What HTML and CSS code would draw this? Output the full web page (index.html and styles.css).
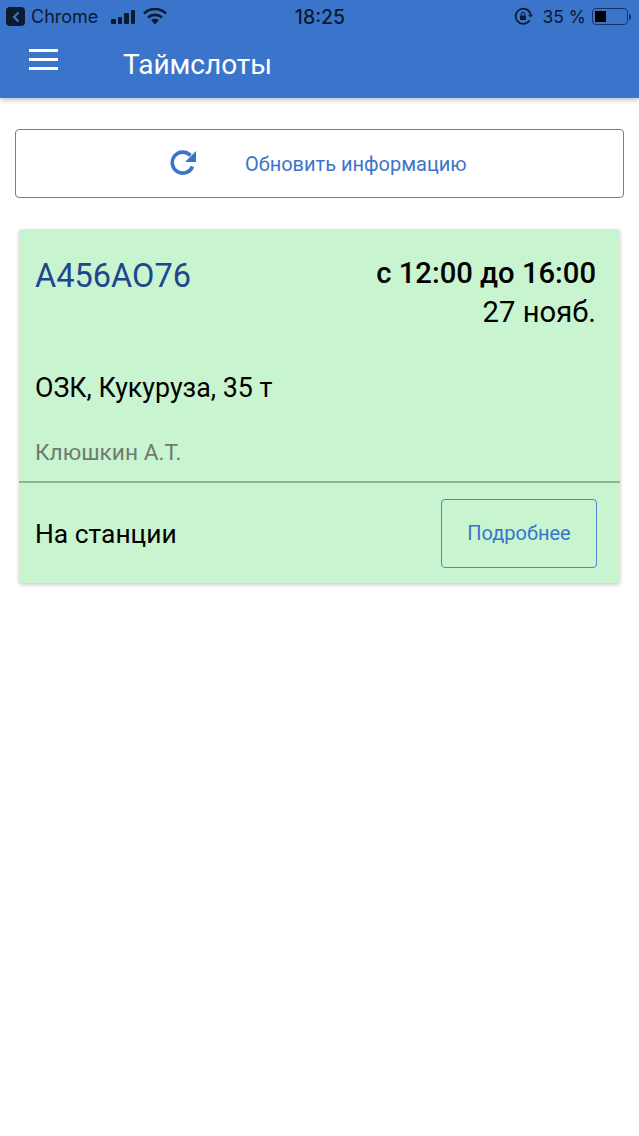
FILE: index.html
```html
<!DOCTYPE html>
<html lang="ru">
<head>
    <meta charset="UTF-8">
    <meta name="viewport" content="width=device-width, initial-scale=1.0">
    <title>Таймслоты</title>
    <link rel="stylesheet" href="styles.css">
</head>
<body>
    <header class="header">
        <div class="status">
            <div class="status-left">
                <span class="back-badge">
                    <svg width="10" height="12" viewBox="0 0 10 12"><path d="M7.5 1.5 3 6l4.5 4.5" fill="none" stroke="#3a75cb" stroke-width="2.2"/></svg>
                </span>
                <span class="status-app">Chrome</span>
                <span class="signal">
                    <i class="bar1"></i><i class="bar2"></i><i class="bar3"></i><i class="bar4"></i>
                </span>
                <svg class="wifi" width="24" height="17" viewBox="0 0 24 17">
                    <path d="M1 5.5C7.500 -.5 16.500 -.5 23 5.5" fill="none" stroke="#0c1a30" stroke-width="2.600"/>
                    <path d="M5 9.500C9 6 15 6 19 9.500" fill="none" stroke="#0c1a30" stroke-width="2.600"/>
                    <path d="M8 12 12 16.500 16 12C13.500 10.300 10.500 10.300 8 12Z" fill="#0c1a30"/>
                </svg>
            </div>
            <div class="status-time">18:25</div>
            <div class="status-right">
                <svg class="rotation" width="19" height="19" viewBox="0 0 19 19">
                    <path d="M15.500 13.500A7.600 7.600 0 1 1 16.500 7" fill="none" stroke="#0c1a30" stroke-width="1.700"/>
                    <path d="M14 7.500h5l-2.500 3z" fill="#0c1a30"/>
                    <rect x="6" y="8.500" width="6" height="4.500" fill="#0c1a30"/>
                    <path d="M7.200 8.500V7a1.800 1.800 0 0 1 3.600 0v1.500" fill="none" stroke="#0c1a30" stroke-width="1"/>
                </svg>
                <span class="battery-text">35 %</span>
                <span class="battery"><span class="battery-level"></span></span>
                <span class="battery-tip"></span>
            </div>
        </div>
        <div class="toolbar">
            <span class="menu-icon"><i></i><i></i><i></i></span>
            <h1 class="title">Таймслоты</h1>
        </div>
    </header>

    <main class="content">
        <button class="refresh" type="button">
            <svg class="refresh-icon" width="28" height="28" viewBox="0 0 28 28">
                <path d="M22.500 17.500A10.500 10.500 0 1 1 20.500 6.500" fill="none" stroke="#3a75cb" stroke-width="3.600"/>
                <path d="M26 2v11H15z" fill="#3a75cb"/>
            </svg>
            <span>Обновить информацию</span>
        </button>

        <section class="card">
            <div class="card-top">
                <div class="plate">А456АО76</div>
                <div class="slot">
                    <div class="slot-time">с 12:00 до 16:00</div>
                    <div class="slot-date">27 нояб.</div>
                </div>
            </div>
            <div class="card-cargo">ОЗК, Кукуруза, 35 т</div>
            <div class="card-driver">Клюшкин А.Т.</div>
            <div class="card-footer">
                <span class="card-status">На станции</span>
                <button class="details" type="button">Подробнее</button>
            </div>
        </section>
    </main>
</body>
</html>
```

FILE: styles.css
```css
* {
    box-sizing: border-box;
}
body {
    margin: 0;
    min-height: 1136px;
    background: #fff;
    font-family: Roboto, sans-serif;
    color: #000;
}
.header {
    height: 98px;
    background: #3a75cb;
    box-shadow: 0 2px 5px rgba(0,0,0,0.25);
}
.status {
    height: 33px;
    padding: 0 8px 0 6px;
    display: grid;
    grid-template-columns: 1fr auto 1fr;
    align-items: center;
    color: #0c1a30;
    font-family: Inter, sans-serif;
}
.status-left {
    display: flex;
    align-items: center;
}
.back-badge {
    width: 19px;
    height: 19px;
    background: #0c1a30;
    border-radius: 4px;
    display: flex;
    align-items: center;
    justify-content: center;
}
.status-app {
    margin-left: 6px;
    font-size: 18px;
}
.signal {
    margin-left: 13px;
    display: flex;
    align-items: flex-end;
    gap: 2px;
}
.signal i {
    display: block;
    width: 4.5px;
    background: #0c1a30;
    border-radius: 1px;
}
.bar1 { height: 5px; }
.bar2 { height: 7px; }
.bar3 { height: 11px; }
.bar4 { height: 14px; }
.wifi {
    margin-left: 8px;
}
.status-time {
    font-size: 19.5px;
    font-weight: 500;
    margin-left: 3px;
}
.status-right {
    display: flex;
    align-items: center;
    justify-content: flex-end;
}
.battery-text {
    margin-left: 9px;
    font-size: 17.5px;
}
.battery {
    margin-left: 6px;
    width: 36px;
    height: 17px;
    border: 1px solid #17345f;
    border-radius: 4px;
    padding: 2px;
}
.battery-level {
    display: block;
    width: 11px;
    height: 100%;
    background: #000;
}
.battery-tip {
    width: 2px;
    height: 6px;
    margin-left: 1px;
    background: #17345f;
    border-radius: 0 2px 2px 0;
}
.toolbar {
    height: 65px;
    padding-bottom: 3px;
    display: flex;
    align-items: center;
}
.menu-icon {
    margin-left: 29px;
    width: 29px;
    display: flex;
    flex-direction: column;
    gap: 6px;
    margin-top: -9px;
}
.menu-icon i {
    display: block;
    height: 3px;
    background: #fff;
}
.title {
    margin: 0 0 0 65px;
    font-size: 28px;
    font-weight: 400;
    color: #fff;
}
.content {
    padding: 31px 15px 0;
}
.refresh {
    width: 609px;
    height: 69px;
    background: #fff;
    border: 1px solid #4f84d3;
    border-radius: 4px;
    display: flex;
    align-items: center;
    padding: 0 0 0 154px;
    font-family: Roboto, sans-serif;
    font-size: 20px;
    color: #3a75cb;
}
.refresh-icon {
    margin-right: 47px;
    margin-top: -1px;
}
.card {
    width: 601px;
    height: 354px;
    margin: 31px 0 0 4px;
    background: #c8f4d0;
    border-radius: 3px;
    box-shadow: 0 2px 4px rgba(0,0,0,0.2);
    display: flex;
    flex-direction: column;
}
.card-top {
    height: 124px;
    padding: 25px 24px 0 16px;
    display: flex;
    justify-content: space-between;
    align-items: flex-start;
}
.plate {
    font-size: 32.5px;
    color: #20458f;
    margin-top: 3px;
}
.slot {
    text-align: right;
    font-size: 29.2px;
    line-height: 39px;
}
.slot-time {
    font-weight: 500;
}
.card-cargo {
    height: 68px;
    padding: 2px 16px 0;
    display: flex;
    align-items: center;
    font-size: 26.8px;
}
.card-driver {
    height: 62px;
    padding: 3px 16px 0;
    border-bottom: 2px solid #8fb398;
    display: flex;
    align-items: center;
    font-size: 22.7px;
    color: #6f7a72;
}
.card-footer {
    flex: 1;
    padding: 2px 23px 0 16px;
    display: flex;
    justify-content: space-between;
    align-items: center;
}
.card-status {
    font-size: 26.4px;
}
.details {
    width: 156px;
    height: 69px;
    margin-top: -2px;
    background: transparent;
    border: 1px solid #4f84d3;
    border-radius: 4px;
    font-family: Roboto, sans-serif;
    font-size: 20px;
    color: #3a75cb;
}
```
